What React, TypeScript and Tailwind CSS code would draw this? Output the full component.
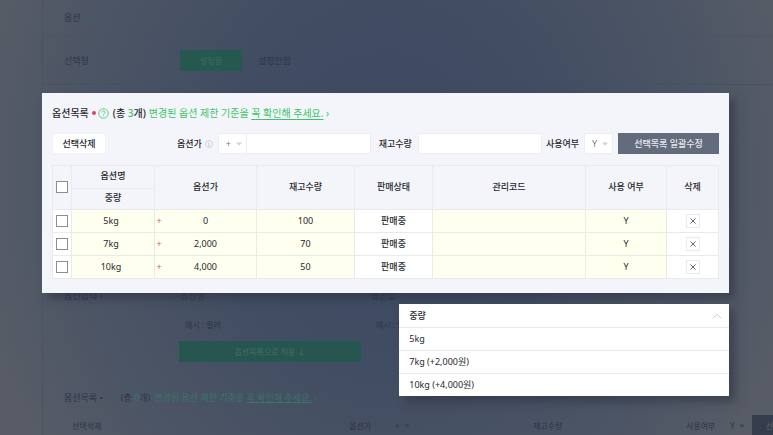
import { useState } from 'react';
import type { ReactNode } from 'react';

type Option = { name: string; price: string; stock: string; status: string; code: string; use: string };

const options: Option[] = [
    { name: '5kg', price: '0', stock: '100', status: '판매중', code: '', use: 'Y' },
    { name: '7kg', price: '2,000', stock: '70', status: '판매중', code: '', use: 'Y' },
    { name: '10kg', price: '4,000', stock: '50', status: '판매중', code: '', use: 'Y' },
];

const choices = ['5kg', '7kg (+2,000원)', '10kg (+4,000원)'];

const HelpIcon = ({ className }: { className: string }) => (
    <svg viewBox="0 0 12 12" fill="none" stroke="currentColor" className={`shrink-0 ${className}`} aria-hidden="true">
        <circle cx="6" cy="6" r="5.2" strokeWidth="0.9" />
        <path d="M4.3 4.9c0-1 .7-1.7 1.7-1.7s1.7.6 1.7 1.5c0 1.2-1.7 1.2-1.7 2.5M6 8.2v.9" strokeWidth="0.9" />
    </svg>
);

const InfoIcon = ({ className }: { className: string }) => (
    <svg viewBox="0 0 12 12" fill="none" stroke="currentColor" className={`shrink-0 ${className}`} aria-hidden="true">
        <circle cx="6" cy="6" r="5.2" />
        <path d="M6 3v1.3M4.8 5.4H6v3.4M4.6 8.8h2.8" />
    </svg>
);

const Caret = ({ className }: { className: string }) => (
    <svg viewBox="0 0 6 4" fill="currentColor" className={className} aria-hidden="true">
        <path d="M0 .5h6L3 3.5z" />
    </svg>
);

const SmallSelect = ({ id, label, values, className }: { id: string; label: string; values: string[]; className: string }) => (
    <span className={`relative flex h-[21px] shrink-0 items-center border border-[#eceef3] bg-white ${className}`}>
        <select
            id={id}
            aria-label={label}
            className="h-full w-full appearance-none bg-transparent pl-[7px] text-[9px] font-normal text-[#777b82] outline-none"
        >
            {values.map(v => <option key={v}>{v}</option>)}
        </select>
        <Caret className="pointer-events-none absolute right-1 h-1 w-1.5 text-[#cdd0d5]" />
    </span>
);

const Tick = ({ label }: { label: string }) => (
    <input
        type="checkbox"
        aria-label={label}
        className="mx-auto block size-3 appearance-none border border-[#8b8d92] bg-white checked:bg-[#8b8d92]"
    />
);

const Head = ({ children, rowSpan }: { children: ReactNode; rowSpan?: number }) => (
    <th scope="col" rowSpan={rowSpan} className="border border-[#e8eaef] p-0 pb-0.5 font-medium">
        {children}
    </th>
);

const Backdrop = () => (
    <div
        aria-hidden="true"
        className="[grid-area:1/1] min-w-0 overflow-hidden bg-[radial-gradient(ellipse_54%_110%_at_50%_40%,#3d4964_0%,#414d62_40%,#4c5565_75%,#575c66_100%)] pl-[42px] text-[9px] leading-3 text-[#2d3546]"
    >
        <div className="flex min-h-screen flex-col border-l border-[#4d5461]">
            <div className="flex h-[37px] items-center gap-[3px] border-b border-[#48515f]/40 px-[21px]">
                <span>옵션</span>
                <HelpIcon className="size-2.5 text-[#40605f]" />
            </div>
            <div className="flex h-12 items-center border-b border-[#414a5b]/40 px-[21px]">
                <span className="w-[116px]">선택형</span>
                <span className="flex h-[21px] w-[62px] items-center justify-center bg-[#275850] text-[8px] text-[#3c6f60]">설정함</span>
                <span className="ml-4">설정안함</span>
            </div>
            <div className="mt-[204px] flex h-3.5 items-center px-[21px]">
                <span className="w-[116px]">옵션입력 •</span>
                <span className="w-[191px]">옵션명</span>
                <span>옵션값</span>
            </div>
            <div className="mt-[15px] flex h-3.5 items-center pl-[142px] text-[8px]">
                <span className="w-[191px]">예시 : 컬러</span>
                <span>예시 : 빨강</span>
            </div>
            <div className="mt-[9px] flex pl-[136px]">
                <span className="flex h-[21px] w-[182px] items-center justify-center bg-[#27554f] text-[8px] text-[#3f7063]">옵션목록으로 적용 ↓</span>
            </div>
            <div className="mt-7 flex h-4 items-center px-[21px]">
                <span>옵션목록 •</span>
                <HelpIcon className="ml-1 size-2.5 text-[#3f6365]" />
                <span className="ml-1">(총 <span className="text-[#3a7568]">0</span>개)</span>
                <span className="ml-1 text-[#3a7568]">변경된 옵션 제한 기준을 <u>꼭 확인해 주세요.</u> ›</span>
            </div>
            <div className="mt-[9px] flex h-[21px] items-center pl-[29px] text-[8px]">
                <span>선택삭제</span>
                <span className="ml-auto">옵션가</span>
                <InfoIcon className="ml-1 size-2 text-[#475062]" />
                <span className="ml-3 flex w-[138px] items-center gap-1">+ <Caret className="h-1 w-1.5 text-[#3c4557]" /></span>
                <span className="w-[153px]">재고수량</span>
                <span className="w-[44px]">사용여부</span>
                <span className="flex w-[22px] items-center gap-1">Y <Caret className="h-1 w-1.5 text-[#3c4557]" /></span>
                <span className="flex h-full w-[21px] items-center justify-end bg-[#353d4c] text-[#5d6574]">선</span>
            </div>
        </div>
    </div>
);

const Toolbar = () => (
    <div className="flex items-center text-[9px] font-medium">
        <button type="button" className="h-[21px] w-[54px] border border-[#eff1f5] bg-white">선택삭제</button>
        <label htmlFor="price" className="ml-auto shrink-0">옵션가</label>
        <InfoIcon className="ml-[3px] size-2 text-[#bfc2c8]" />
        <SmallSelect id="sign" label="옵션가 부호" values={['+', '-']} className="ml-[5px] w-[29px]" />
        <input id="price" className="h-[21px] min-w-0 flex-[0_1_124px] border border-l-0 border-[#eceef3] bg-white px-1" />
        <label htmlFor="stock" className="ml-2 shrink-0">재고수량</label>
        <input id="stock" className="ml-1.5 h-[21px] min-w-0 flex-[0_1_124px] border border-[#eceef3] bg-white px-1" />
        <label htmlFor="use" className="ml-1 shrink-0">사용여부</label>
        <SmallSelect id="use" label="사용여부" values={['Y', 'N']} className="ml-[5px] w-[29px]" />
        <button type="button" className="ml-[5px] h-[21px] w-[101px] shrink-0 bg-[#626c7d] text-[#e9ebef]">선택목록 일괄수정</button>
    </div>
);

const OptionTable = () => {
    const cell = 'border border-[#e9ebe8] p-0';
    const editable = `${cell} bg-[#fffff0]`;

    return (
        <table className="mt-[11px] w-full table-fixed border-collapse text-center text-[9px] leading-3">
            <colgroup>
                <col className="w-[19px]" />
                <col className="w-[83px]" />
                <col className="w-[102px]" />
                <col className="w-[98px]" />
                <col className="w-[78px]" />
                <col />
                <col className="w-[81px]" />
                <col className="w-[52px]" />
            </colgroup>
            <thead>
                <tr className="h-[23px]">
                    <Head rowSpan={2}><Tick label="전체 선택" /></Head>
                    <Head>옵션명</Head>
                    <Head rowSpan={2}>옵션가</Head>
                    <Head rowSpan={2}>재고수량</Head>
                    <Head rowSpan={2}>판매상태</Head>
                    <Head rowSpan={2}>관리코드</Head>
                    <Head rowSpan={2}>사용 여부</Head>
                    <Head rowSpan={2}>삭제</Head>
                </tr>
                <tr className="h-[21px]">
                    <Head>중량</Head>
                </tr>
            </thead>
            <tbody>
                {options.map(o => (
                    <tr key={o.name} className="h-[23px]">
                        <td className={`${cell} bg-white`}><Tick label={o.name} /></td>
                        <td className={`${editable} pr-1`}>{o.name}</td>
                        <td className={editable}>
                            <div className="flex items-center">
                                <span className="w-2 text-[#cf5a66]">+</span>
                                <span className="flex-1 pr-2">{o.price}</span>
                            </div>
                        </td>
                        <td className={editable}>{o.stock}</td>
                        <td className={`${cell} bg-white font-medium`}>{o.status}</td>
                        <td className={editable}>{o.code}</td>
                        <td className={editable}>{o.use}</td>
                        <td className={`${cell} bg-white`}>
                            <button
                                type="button"
                                aria-label={`${o.name} 삭제`}
                                className="mx-auto flex size-3.5 items-center justify-center border border-[#e8eaed] bg-white"
                            >
                                <svg viewBox="0 0 6 6" className="size-1.5" stroke="#55585e" strokeWidth="0.9">
                                    <path d="M.4.4l5.2 5.2M5.600.4L.4 5.6" />
                                </svg>
                            </button>
                        </td>
                    </tr>
                ))}
            </tbody>
        </table>
    );
};

const OptionPanel = () => (
    <section className="bg-[#f4f5fa] px-2.5 pt-3 pb-3.5 shadow-[6px_6px_8px_rgba(48,52,66,0.6)]">
        <header className="flex h-4 items-center text-[10px] font-medium">
            <h1>옵션목록</h1>
            <span className="ml-[3px] size-1 rounded-full bg-[#e2405c]" />
            <HelpIcon className="ml-0.5 size-[11px] text-[#45c46c]" />
            <span className="ml-1">(총 <span className="text-[#3cc466]">3</span>개)</span>
            <a href="#limit" className="ml-[3px] font-normal text-[#3cc466]">
                변경된 옵션 제한 기준을 <span className="underline underline-offset-2">꼭 확인해 주세요.</span> ›
            </a>
        </header>
        <div className="mt-3">
            <Toolbar />
        </div>
        <OptionTable />
    </section>
);

const OptionPicker = () => {
    const [open, setOpen] = useState(true);

    return (
        <div className="mt-[11px] ml-auto w-[48%] bg-white text-[9px] shadow-[6px_6px_8px_rgba(48,52,66,0.6)]">
            <button
                type="button"
                onClick={() => setOpen(!open)}
                aria-expanded={open}
                className="flex h-[23px] w-full items-center justify-between pr-[7px] pl-2.5 font-medium"
            >
                중량
                <svg viewBox="0 0 10 6" fill="none" stroke="#c9cbcf" className="h-1.5 w-2.5">
                    <path d="M.8 5.4L5 1.2l4.2 4.2" />
                </svg>
            </button>
            {open && (
                <ul>
                    {choices.map(c => (
                        <li key={c} className="flex h-[23px] items-center border-t border-[#e8e9eb] pl-2.5">{c}</li>
                    ))}
                </ul>
            )}
        </div>
    );
};

export default function App() {
    return (
        <div
            lang="ko"
            className="grid min-h-screen overflow-hidden font-['Noto_Sans','Noto_Sans_CJK_KR',sans-serif] text-[#26282d]"
        >
            <Backdrop />
            <main className="[grid-area:1/1] z-10 min-w-0 pt-[93px] pr-11 pl-[42px]">
                <OptionPanel />
                <OptionPicker />
            </main>
        </div>
    );
}
